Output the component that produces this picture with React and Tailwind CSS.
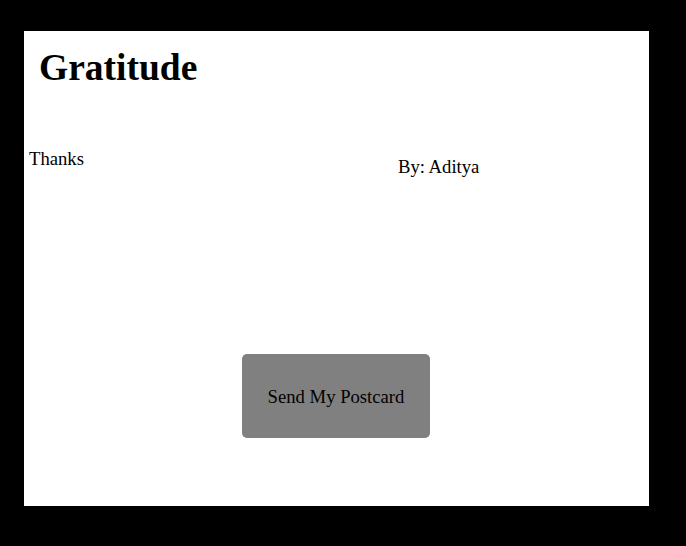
export default function App() {
  return (
    <div className="h-[546px] w-full bg-black pt-[31px] pl-[24px] font-['Liberation_Serif',serif] text-black">
      <div className="flex h-[475px] w-[625px] flex-col bg-white">
        <h1 className="pl-[15px] pt-[18px] text-[37.5px] font-bold leading-[38px]">Gratitude</h1>

        <div className="mt-[63px] flex items-start text-[18.67px] leading-[18.67px]">
          <p className="w-[374px] pl-[5px]">Thanks</p>
          <p className="mt-[8px]">By: Aditya</p>
        </div>

        <button className="ml-[218px] mt-[177px] flex h-[84px] w-[188px] items-center justify-center rounded-[5px] bg-[#808080] pt-[3px] text-[18.67px] leading-[18.67px] text-black">
          Send My Postcard
        </button>
      </div>
    </div>
  );
}
